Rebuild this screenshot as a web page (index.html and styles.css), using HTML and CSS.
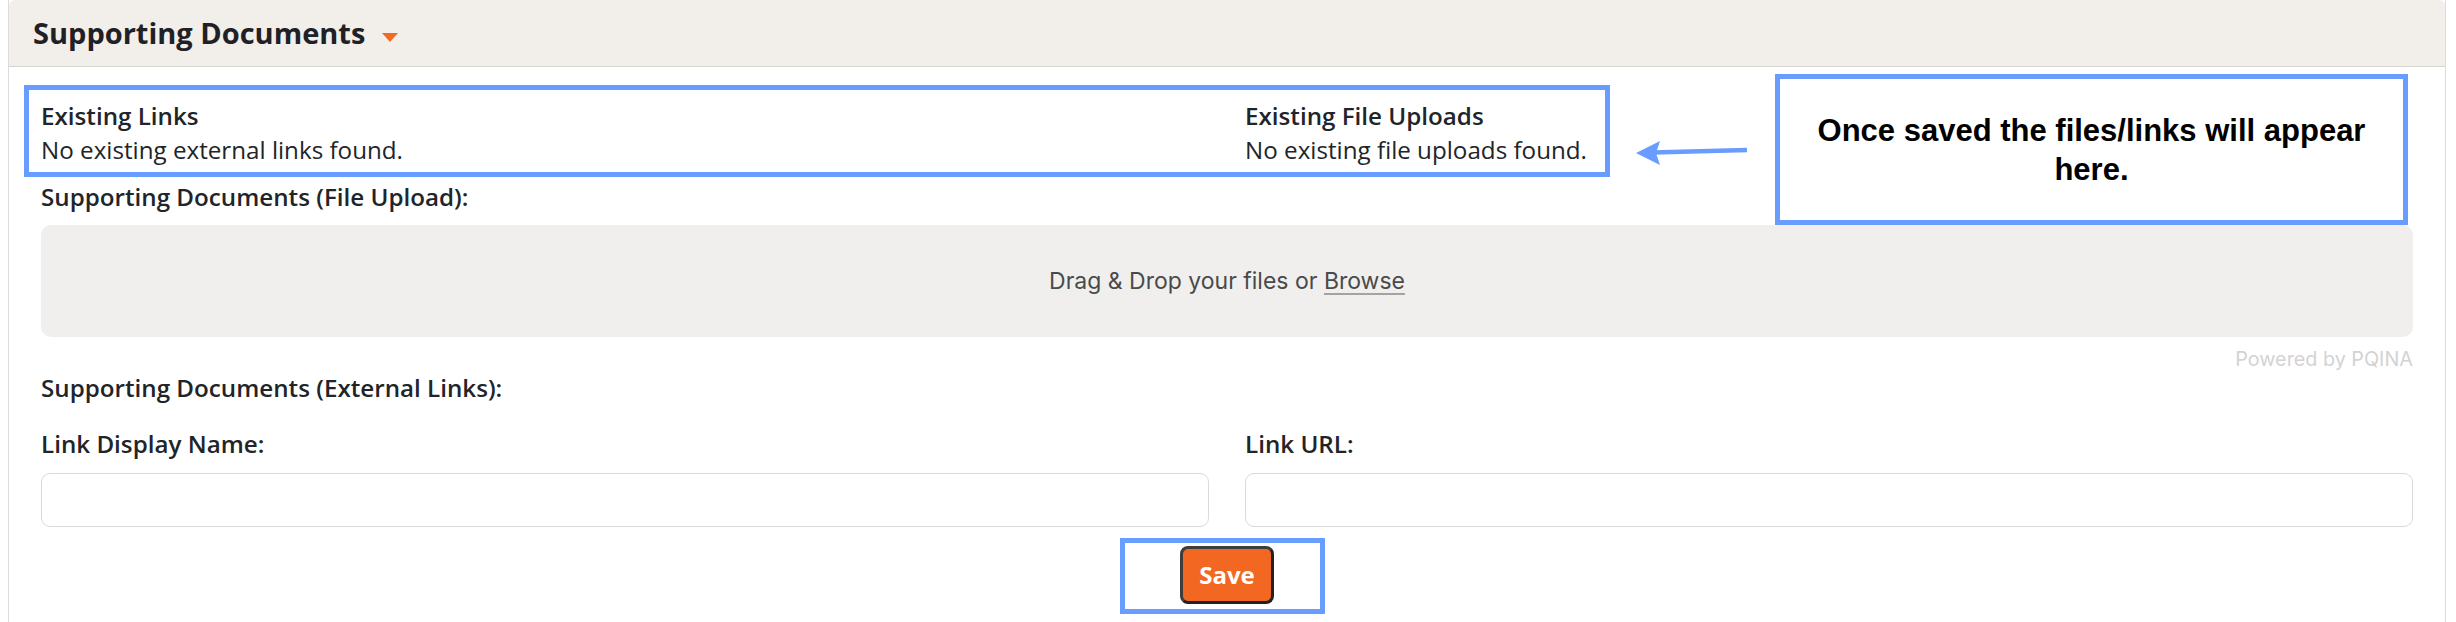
FILE: index.html
```html
<!DOCTYPE html>
<html lang="en">
<head>
<meta charset="utf-8">
<title>Supporting Documents</title>
<link rel="stylesheet" href="styles.css">
</head>
<body>
<section class="panel">
  <header class="panel-header">
    <h2 class="panel-title">Supporting Documents</h2>
    <span class="caret"></span>
  </header>
  <div class="panel-body">
    <div class="existing">
      <div class="existing-col">
        <div class="col-title">Existing Links</div>
        <div class="col-text">No existing external links found.</div>
      </div>
      <div class="existing-col">
        <div class="col-title">Existing File Uploads</div>
        <div class="col-text">No existing file uploads found.</div>
      </div>
      <div class="annot annot-existing"></div>
      <svg class="annot-arrow" width="120" height="32" viewBox="0 0 120 32">
        <line x1="116" y1="15" x2="22" y2="17.5" stroke="#699cff" stroke-width="4.5"/>
        <polygon points="5,18 29,6 25,18 29,30" fill="#699cff"/>
      </svg>
      <div class="annot annot-callout"><p>Once saved the files/links will appear here.</p></div>
    </div>

    <div class="field-label">Supporting Documents (File Upload):</div>
    <div class="dropzone">
      <span class="drop-label">Drag &amp; Drop your files or <span class="browse">Browse</span></span>
    </div>
    <div class="credits">Powered by PQINA</div>

    <div class="field-label ext-label">Supporting Documents (External Links):</div>
    <div class="links-grid">
      <div class="field">
        <label class="field-label">Link Display Name:</label>
        <input class="text-input" type="text">
      </div>
      <div class="field">
        <label class="field-label">Link URL:</label>
        <input class="text-input" type="text">
      </div>
    </div>

    <div class="actions">
      <div class="save-wrap">
        <button class="save-btn" type="button">Save</button>
        <div class="annot annot-save"></div>
      </div>
    </div>
  </div>
</section>
</body>
</html>
```

FILE: styles.css
```css
html, body {
  margin: 0;
  padding: 0;
  background: #ffffff;
}

body {
  margin: 0 10px 0 8px;
  font-family: "Open Sans", "Noto Sans", sans-serif;
  font-size: 24.2px;
  color: #212529;
  overflow: hidden;
}

.panel {
  border: 1px solid #dcdcdc;
  border-top: 0;
  border-radius: 0 0 6px 6px;
  height: 640px;
  box-sizing: border-box;
}

.panel-header {
  height: 66px;
  background: #f2efeb;
  border-bottom: 1px solid #d6d4d0;
  border-radius: 6px 6px 0 0;
  display: flex;
  align-items: center;
  padding: 0 24px;
}

.panel-title {
  margin: 0;
  font-size: 29px;
  font-weight: 700;
  line-height: 1.362;
  color: #1f2126;
}

.caret {
  width: 0;
  height: 0;
  border-left: 8.5px solid transparent;
  border-right: 8.5px solid transparent;
  border-top: 9px solid #f26a22;
  margin-left: 17px;
  margin-top: 8px;
}

.panel-body {
  padding: 32px 32px 0 32px;
}

.existing {
  position: relative;
  display: grid;
  grid-template-columns: 1fr 1fr;
  column-gap: 36px;
  line-height: 33.5px;
}

.col-title {
  font-weight: 600;
}

.annot {
  position: absolute;
  border: 5px solid #699cff;
  box-sizing: border-box;
}

.annot-existing {
  left: -17px;
  top: -14px;
  width: 1586px;
  height: 92px;
}

.annot-arrow {
  position: absolute;
  left: 1590px;
  top: 36px;
}

.annot-callout {
  left: 1734px;
  top: -25px;
  width: 633px;
  height: 151px;
  background: #ffffff;
  display: flex;
  align-items: center;
  justify-content: center;
  padding: 0 28px;
}

.annot-callout p {
  margin: 0;
  font-family: "Liberation Sans", Arial, sans-serif;
  font-weight: 700;
  font-size: 31px;
  line-height: 39px;
  text-align: center;
  color: #000000;
}

.field-label {
  display: block;
  font-weight: 600;
  line-height: 33.5px;
}

.existing + .field-label {
  margin-top: 14px;
}

.dropzone {
  margin-top: 11px;
  height: 112px;
  background: #f0efed;
  border-radius: 10px;
  display: flex;
  align-items: center;
  justify-content: center;
  font-family: Inter, "Noto Sans", sans-serif;
  font-size: 23px;
  color: #4a4a4a;
}

.browse {
  text-decoration: underline;
  text-decoration-color: #a3a3a3;
  text-decoration-thickness: 2px;
  text-underline-offset: 4px;
}

.credits {
  margin-top: 12px;
  text-align: right;
  font-family: Inter, "Noto Sans", sans-serif;
  font-size: 19.8px;
  line-height: 20px;
  color: #d3d3d3;
}

.ext-label {
  margin-top: 2px;
}

.links-grid {
  margin-top: 23px;
  display: grid;
  grid-template-columns: 1fr 1fr;
  column-gap: 36px;
}

.field {
  display: flex;
  flex-direction: column;
}

.text-input {
  margin-top: 12.5px;
  height: 54px;
  box-sizing: border-box;
  border: 1.5px solid #dadada;
  border-radius: 9px;
  background: #ffffff;
  font: inherit;
  padding: 0 14px;
  outline: none;
}

.actions {
  margin-top: 18.5px;
  display: flex;
  justify-content: center;
}

.save-wrap {
  position: relative;
}

.save-btn {
  width: 94px;
  height: 58px;
  box-sizing: border-box;
  background: #f26722;
  border: 3px solid #222222;
  border-top-color: #3d3d3d;
  border-left-color: #3d3d3d;
  border-radius: 8px;
  color: #ffffff;
  font-family: "Open Sans", "Noto Sans", sans-serif;
  font-weight: 700;
  font-size: 24px;
  padding: 0;
  cursor: pointer;
}

.annot-save {
  left: -60px;
  top: -8px;
  width: 205px;
  height: 76px;
}
```
